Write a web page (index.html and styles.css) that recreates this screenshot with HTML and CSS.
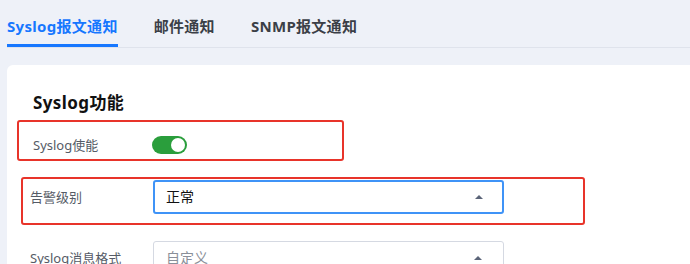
FILE: index.html
```html
<!DOCTYPE html>
<html lang="zh">
<head>
    <meta charset="UTF-8">
    <meta name="viewport" content="width=device-width, initial-scale=1.0">
    <title>告警通知</title>
    <link rel="stylesheet" href="styles.css">
</head>
<body>
    <div class="tabs">
        <div class="tab active">Syslog报文通知</div>
        <div class="tab">邮件通知</div>
        <div class="tab">SNMP报文通知</div>
    </div>

    <div class="card">
        <h2>Syslog功能</h2>

        <div class="row row-switch">
            <label>Syslog使能</label>
            <span class="switch on"><span class="knob"></span></span>
        </div>

        <div class="row row-level">
            <label>告警级别</label>
            <div class="select focus">
                <span class="value">正常</span>
                <span class="arrow"></span>
            </div>
        </div>

        <div class="row row-format">
            <label>Syslog消息格式</label>
            <div class="select">
                <span class="value muted">自定义</span>
                <span class="arrow"></span>
            </div>
        </div>

        <!-- annotation boxes -->
        <div class="mark mark-1"></div>
        <div class="mark mark-2"></div>
    </div>
</body>
</html>
```

FILE: styles.css
```css
body {
    margin: 0;
    padding: 0;
    background-color: #eef1f8;
    font-family: "Noto Sans", "Noto Sans CJK SC", sans-serif;
    color: #333;
    overflow: hidden;
}

.tabs {
    display: flex;
    gap: 36px;
    margin-left: 7px;
    padding-top: 16px;
    border-bottom: 1px solid #dfe3ec;
}

.tab {
    font-size: 15px;
    font-weight: bold;
    letter-spacing: 0.3px;
    color: #3b3f47;
    line-height: 20px;
    padding-bottom: 8px;
    border-bottom: 3px solid transparent;
}

.tab.active {
    color: #1677ff;
    border-bottom-color: #1677ff;
}

.card {
    position: relative;
    margin: 17px 0 0 7px;
    background-color: #fff;
    border-radius: 6px 0 0 0;
    padding: 26px 0 0 0;
    height: 300px;
}

h2 {
    margin: 0 0 0 26px;
    font-size: 17px;
    letter-spacing: 0.4px;
    line-height: 24px;
    font-weight: bold;
    color: #111;
}

.row {
    display: flex;
    align-items: center;
}

.row label {
    width: 123px;
    font-size: 13px;
    line-height: 18px;
    color: #555b66;
}

.row-switch {
    margin: 20px 0 0 26px;
    height: 20px;
}

.row-switch label {
    width: 119px;
}

.switch {
    display: flex;
    justify-content: flex-end;
    align-items: center;
    width: 35px;
    height: 18px;
    border-radius: 9px;
    background-color: #2a9e3c;
    padding: 0 2px;
    box-sizing: border-box;
}

.knob {
    width: 14px;
    height: 14px;
    border-radius: 50%;
    background-color: #fff;
}

.row-level {
    margin: 25px 0 0 23px;
}

.row-format {
    margin: 27px 0 0 23px;
}

.select {
    position: relative;
    display: flex;
    align-items: center;
    width: 351px;
    height: 34px;
    box-sizing: border-box;
    border: 1px solid #d5d9e2;
    border-radius: 3px;
    padding: 0 12px;
}

.select.focus {
    border: 2px solid #3f93f7;
    padding: 0 11px;
}

.value {
    font-size: 14px;
    line-height: 20px;
    color: #111;
}

.value.muted {
    color: #8a8f99;
}

.arrow {
    margin-left: auto;
    margin-right: 9px;
    width: 0;
    height: 0;
    border-left: 4.5px solid transparent;
    border-right: 4.5px solid transparent;
    border-bottom: 4px solid #5b6478;
}

.select.focus .arrow {
    margin-right: 8px;
}

.mark {
    position: absolute;
    border: 2px solid #e8342a;
    border-radius: 3px;
    box-sizing: border-box;
}

.mark-1 {
    left: 10px;
    top: 55px;
    width: 327px;
    height: 41px;
}

.mark-2 {
    left: 14px;
    top: 112px;
    width: 564px;
    height: 48px;
}
```
